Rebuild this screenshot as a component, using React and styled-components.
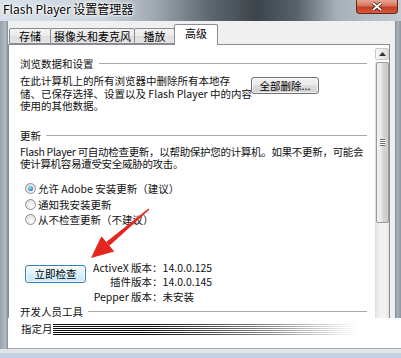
import React from "react";
import styled, { createGlobalStyle } from "styled-components";

const GlobalStyle = createGlobalStyle`
  html, body { margin: 0; padding: 0; background: #fff; }
  body { font-family: "Noto Sans CJK SC", "Noto Sans", sans-serif; }
`;

const tabs = [
  { label: "存储", width: 42 },
  { label: "摄像头和麦克风", width: 85 },
  { label: "播放", width: 41 },
  { label: "高级", width: 44, active: true },
];

const radios = [
  { label: "允许 Adobe 安装更新（建议）", checked: true },
  { label: "通知我安装更新" },
  { label: "从不检查更新（不建议）" },
];

const versions = [
  ["ActiveX 版本：", "14.0.0.125"],
  ["插件版本：", "14.0.0.145"],
  ["Pepper 版本：", "未安装"],
];

const Window = styled.div`
  position: relative;
  width: 401px;
  height: 358px;
  overflow: hidden;
  display: flex;
  flex-direction: column;
  background: #aab4bd;
  color: #111;
  font-size: 10.5px;
`;

const TitleBar = styled.div`
  height: 21px;
  flex: none;
  display: flex;
  align-items: flex-start;
  justify-content: space-between;
  background: linear-gradient(
    90deg,
    #d9e2ea 0%,
    #cbd4dc 25%,
    #a2abb3 38%,
    #5f686f 52%,
    #3d454b 64%,
    #58626a 74%,
    #a6b0b8 84%,
    #c3ccd3 100%
  );
`;

const Title = styled.div`
  font-size: 12px;
  line-height: 17px;
  padding-left: 3px;
  color: #000;
  text-shadow: 0 0 5px #fff, 0 0 3px #fff, 0 0 2px #fff;
`;

const CloseButton = styled.div`
  width: 42px;
  height: 14px;
  margin-right: 3px;
  box-sizing: border-box;
  border: 1px solid #6b2417;
  border-top: none;
  border-radius: 0 0 4px 4px;
  background: linear-gradient(#e9a493 0%, #d7725c 45%, #c13d23 55%, #d45a3e 100%);
  display: flex;
  align-items: center;
  justify-content: center;
`;

const Frame = styled.div`
  display: grid;
  grid-template-columns: 8px 1fr 6px;
  grid-template-rows: 297px 31px;
`;

const LeftFrame = styled.div`
  grid-row: 1 / 3;
  background: linear-gradient(90deg, #97a2ac 0%, #b2bbc3 70%, #7f8a94 100%);
`;

const RightFrame = styled.div`
  background: linear-gradient(90deg, #7f8a94 0%, #a9b3bc 40%, #8c97a1 100%);
`;

const Body = styled.div`
  background: #f0f0f0;
  display: flex;
  flex-direction: column;
`;

const TabStrip = styled.div`
  height: 23px;
  padding-left: 1px;
  display: flex;
  align-items: flex-end;
`;

const Tab = styled.div`
  box-sizing: border-box;
  width: ${(p) => p.$width}px;
  height: ${(p) => (p.$active ? 21 : 16)}px;
  margin-right: -1px;
  margin-bottom: ${(p) => (p.$active ? -1 : 0)}px;
  position: relative;
  z-index: ${(p) => (p.$active ? 2 : 1)};
  border: 1px solid #898c95;
  border-bottom: ${(p) => (p.$active ? "none" : "1px solid #898c95")};
  border-radius: 2px 2px 0 0;
  background: ${(p) =>
    p.$active ? "#fff" : "linear-gradient(#f3f3f3 0%, #ebebeb 50%, #dedede 51%, #e5e5e5 100%)"};
  font-size: 11px;
  line-height: ${(p) => (p.$active ? 17 : 15)}px;
  text-align: center;
  color: #000;
`;

const PageRow = styled.div`
  display: flex;
`;

const Page = styled.div`
  box-sizing: border-box;
  width: 382px;
  height: 274px;
  border: 1px solid #898c95;
  border-bottom: none;
  background: #fff;
  display: flex;
`;

const Content = styled.div`
  width: 366px;
  box-sizing: border-box;
  padding: 0 8px 0 11px;
  overflow: hidden;
  display: flex;
  flex-direction: column;
`;

const Heading = styled.div`
  display: flex;
  align-items: center;
  gap: 5px;
  line-height: 13px;
  margin-top: ${(p) => p.$top}px;
  white-space: nowrap;
  &::after {
    content: "";
    flex: 1;
    border-top: 1px solid #a9a9a9;
  }
`;

const ClearRow = styled.div`
  display: flex;
  align-items: flex-start;
  margin-top: 5px;
`;

const Para = styled.div`
  width: ${(p) => p.$width || 347}px;
  line-height: ${(p) => p.$lh}px;
  margin-top: ${(p) => p.$top || 0}px;
  letter-spacing: ${(p) => p.$tight || 0}px;
  white-space: nowrap;
`;

const Button = styled.button`
  font: inherit;
  font-size: 10.5px;
  color: #000;
  width: ${(p) => p.$w}px;
  height: ${(p) => p.$h}px;
  margin-top: ${(p) => p.$top}px;
  margin-left: ${(p) => p.$left}px;
  padding: 0;
  flex: none;
  box-sizing: border-box;
  border: 1px solid ${(p) => (p.$default ? "#3c7fb1" : "#707070")};
  border-radius: 3px;
  background: ${(p) =>
    p.$default
      ? "linear-gradient(#f1f9fe 0%, #e5f4fc 45%, #d7eefb 50%, #c9e7f9 100%)"
      : "linear-gradient(#f2f2f2 0%, #ebebeb 45%, #dddddd 50%, #cfcfcf 100%)"};
  box-shadow: inset 0 0 0 1px rgba(255, 255, 255, 0.75);
  line-height: ${(p) => p.$h - 2}px;
`;

const RadioList = styled.div`
  margin-top: 11px;
  display: flex;
  flex-direction: column;
`;

const RadioItem = styled.label`
  height: 15.5px;
  display: flex;
  align-items: center;
  gap: 2px;
  padding-left: 5px;
  white-space: nowrap;
`;

const RadioCircle = styled.span`
  width: 11px;
  height: 11px;
  flex: none;
  box-sizing: border-box;
  border-radius: 50%;
  border: 1px solid #8e8f8f;
  background: radial-gradient(circle at 60% 65%, #fdfdfd 0%, #e6e6e6 60%, #cfcfcf 100%);
  display: flex;
  align-items: center;
  justify-content: center;
  &::after {
    content: "";
    display: ${(p) => (p.$checked ? "block" : "none")};
    width: 5px;
    height: 5px;
    border-radius: 50%;
    background: radial-gradient(circle at 40% 35%, #b9e6ff 0%, #3b94d9 55%, #155a9c 100%);
  }
`;

const CheckRow = styled.div`
  display: flex;
  align-items: flex-start;
  margin-top: 33px;
`;

const Versions = styled.div`
  display: grid;
  grid-template-columns: auto auto;
  grid-auto-rows: 14.5px;
  column-gap: 0;
  line-height: 14.5px;
  margin-left: 7px;
  white-space: nowrap;
`;

const VersionLabel = styled.span`
  text-align: right;
`;

const Scroll = styled.div`
  width: 14px;
  display: flex;
  flex-direction: column;
  padding-top: 3px;
  background: #fff;
`;

const ScrollArrow = styled.div`
  height: 12px;
  box-sizing: border-box;
  border: 1px solid #c9c9c9;
  border-radius: 2px;
  background: linear-gradient(90deg, #f6f6f6, #ececec 50%, #dcdcdc);
  display: flex;
  align-items: center;
  justify-content: center;
`;

const Track = styled.div`
  flex: 1;
  margin-top: 2px;
  background: linear-gradient(90deg, #e4e4e4 0%, #f2f2f2 30%, #f2f2f2 70%, #e4e4e4 100%);
  border-left: 1px solid #e0e0e0;
`;

const Thumb = styled.div`
  height: 161px;
  box-sizing: border-box;
  border: 1px solid #9a9a9a;
  border-radius: 2px;
  background: linear-gradient(90deg, #f3f3f3 0%, #e6e6e6 45%, #d4d4d4 55%, #cbcbcb 100%);
  display: flex;
  align-items: center;
  justify-content: center;
`;

const Grip = styled.div`
  width: 5px;
  height: 7px;
  background: repeating-linear-gradient(#6b6b6b 0 1px, #fff 1px 2px);
`;

const Bottom = styled.div`
  grid-column: 2 / 4;
  background: #fff;
  border-bottom: 1px solid #a2a7ab;
  display: flex;
  align-items: flex-start;
  padding: 4px 0 0 13px;
`;

const DevLabel = styled.span`
  white-space: nowrap;
  line-height: 14px;
`;

const Smear = styled.div`
  width: 305px;
  height: 11px;
  margin-top: 2px;
  background: repeating-linear-gradient(#0c0c0c 0 1px, #ffffff 1px 2px);
  -webkit-mask-image: linear-gradient(90deg, #000 0%, #000 30%, rgba(0, 0, 0, 0.5) 70%, transparent 100%);
  mask-image: linear-gradient(90deg, #000 0%, #000 30%, rgba(0, 0, 0, 0.5) 70%, transparent 100%);
`;

const BottomFrame = styled.div`
  flex: 1;
  background: linear-gradient(#e3e6e9 0 4px, #c3d3e3 4px);
`;

const Arrow = styled.svg`
  position: absolute;
  left: 88px;
  top: 205px;
  width: 64px;
  height: 56px;
  pointer-events: none;
`;

export default function App() {
  return (
    <>
      <GlobalStyle />
      <Window>
        <TitleBar>
          <Title>Flash Player 设置管理器</Title>
          <CloseButton>
            <svg width="12" height="9" viewBox="0 0 12 9">
              <path d="M2 1 L10 8 M10 1 L2 8" stroke="#3a1a14" strokeWidth="3.4" />
              <path d="M2 1 L10 8 M10 1 L2 8" stroke="#fff" strokeWidth="1.8" />
            </svg>
          </CloseButton>
        </TitleBar>

        <Frame>
          <LeftFrame />
          <Body>
            <TabStrip>
              {tabs.map((t) => (
                <Tab key={t.label} $width={t.width} $active={t.active}>
                  {t.label}
                </Tab>
              ))}
            </TabStrip>
            <PageRow>
              <Page>
                <Content>
                  <Heading $top={12}>浏览数据和设置</Heading>
                  <ClearRow>
                    <Para $width={222} $lh={12.5}>
                      在此计算机上的所有浏览器中删除所有本地存
                      <br />
                      储、已保存选择、设置以及 Flash Player 中的内容
                      <br />
                      使用的其他数据。
                    </Para>
                    <Button $w={68} $h={17} $top={2} $left={9}>
                      全部删除...
                    </Button>
                  </ClearRow>

                  <Heading $top={16}>更新</Heading>
                  <Para $lh={12} $top={4.5} $tight={-0.3}>
                    Flash Player 可自动检查更新，以帮助保护您的计算机。如果不更新，可能会
                    <br />
                    使计算机容易遭受安全威胁的攻击。
                  </Para>
                  <RadioList>
                    {radios.map((r) => (
                      <RadioItem key={r.label}>
                        <RadioCircle $checked={r.checked} />
                        {r.label}
                      </RadioItem>
                    ))}
                  </RadioList>

                  <CheckRow>
                    <Button $w={61} $h={18} $top={4} $left={5} $default>
                      立即检查
                    </Button>
                    <Versions>
                      {versions.map(([k, v]) => (
                        <React.Fragment key={k}>
                          <VersionLabel>{k}</VersionLabel>
                          <span>{v}</span>
                        </React.Fragment>
                      ))}
                    </Versions>
                  </CheckRow>

                  <Heading $top={1}>开发人员工具</Heading>
                </Content>
                <Scroll>
                  <ScrollArrow>
                    <svg width="7" height="4" viewBox="0 0 7 4">
                      <path d="M0 4 L3.5 0 L7 4 Z" fill="#333" />
                    </svg>
                  </ScrollArrow>
                  <Track>
                    <Thumb>
                      <Grip />
                    </Thumb>
                  </Track>
                </Scroll>
              </Page>
            </PageRow>
          </Body>
          <RightFrame />
          <Bottom>
            <DevLabel>指定月</DevLabel>
            <Smear />
          </Bottom>
        </Frame>
        <BottomFrame />

        <Arrow viewBox="88 205 64 56">
          <polygon
            points="149.5,209.6 148.5,208.4 106.2,241.9 109.4,245.7"
            fill="#e3261f"
          />
          <polygon points="91,258 101.4,236.2 114.3,251.4" fill="#e3261f" />
        </Arrow>
      </Window>
    </>
  );
}
